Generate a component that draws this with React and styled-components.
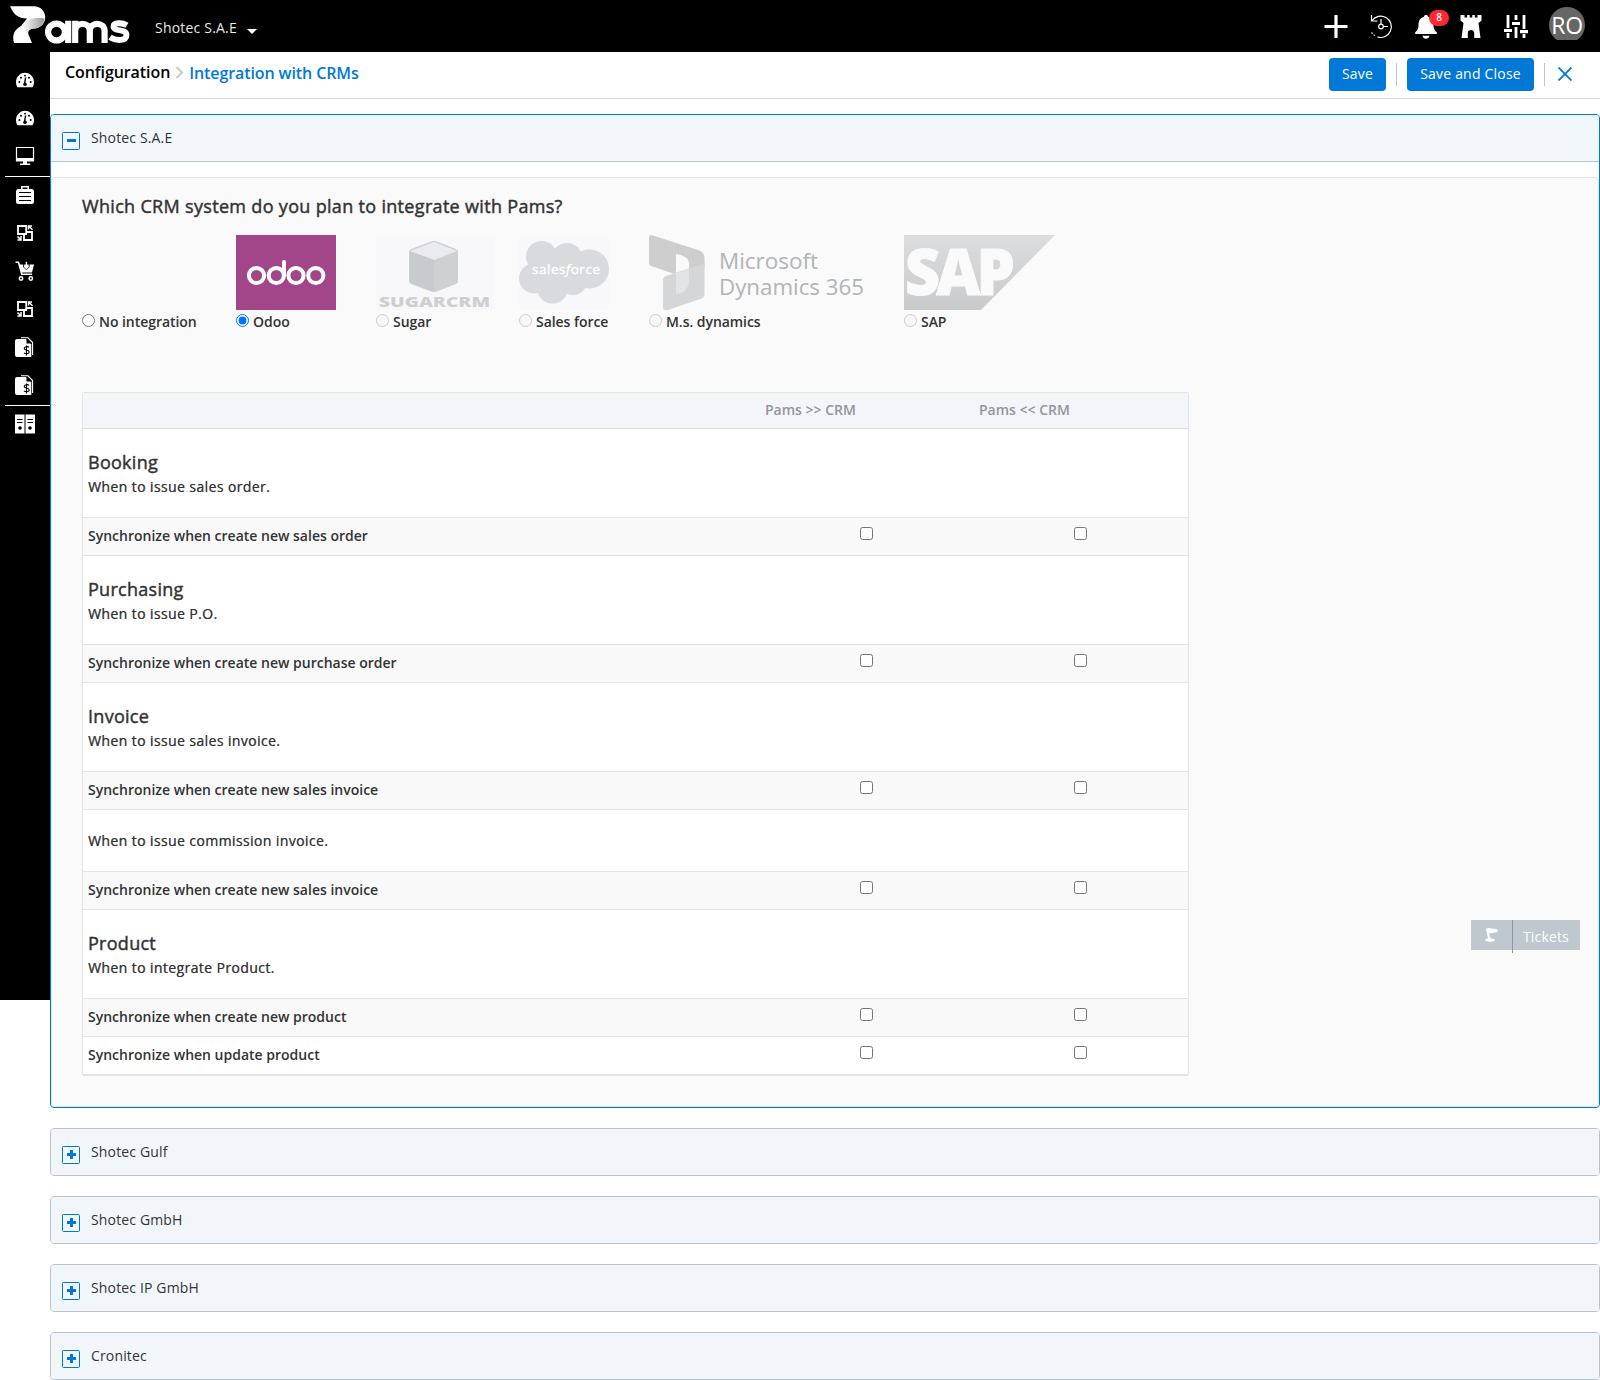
import React from 'react';
import styled, { createGlobalStyle } from 'styled-components';

const GlobalStyle = createGlobalStyle`
    * {
        box-sizing: border-box;
    }
    body {
        margin: 0;
        background: #fff;
        color: #333;
        font-family: 'Open Sans', 'Liberation Sans', sans-serif;
        font-size: 14px;
    }
`;

const TopBar = styled.header`
    height: 52px;
    background: #000;
    color: #fff;
    display: flex;
    align-items: flex-start;
    padding-left: 10px;
    padding-right: 15px;
`;

const Logo = styled.svg`
    width: 120px;
    height: 40px;
    margin-top: 5px;
`;

const CompanyPicker = styled.div`
    margin-left: 25px;
    display: flex;
    align-items: center;
    height: 55px;
    gap: 10px;
    letter-spacing: 0.2px;
    color: #e8e8e8;
`;

const Caret = styled.span`
    margin-top: 7px;
    border: 5px solid transparent;
    border-top-color: #fff;
    border-bottom: 0;
`;

const Actions = styled.div`
    margin-left: auto;
    display: flex;
    padding-top: 14px;
    gap: 21px;
    svg {
        width: 24px;
        height: 25px;
        display: block;
    }
`;

const Bell = styled.div`
    position: relative;
`;

const Badge = styled.span`
    position: absolute;
    left: 15px;
    top: -4px;
    width: 20px;
    height: 16px;
    border-radius: 8px;
    background: #ff2830;
    font-size: 10px;
    line-height: 15px;
    font-weight: 600;
    text-align: center;
`;

const AvatarFrame = styled.div`
    width: 36px;
    height: 33px;
    margin-top: -7px;
    overflow: hidden;
`;

const Avatar = styled.div`
    width: 36px;
    height: 36px;
    border-radius: 50%;
    background: #666;
    font-size: 23px;
    line-height: 36px;
    text-align: center;
    letter-spacing: -0.2px;
`;

const Layout = styled.div`
    display: flex;
    align-items: flex-start;
`;

const Sidebar = styled.nav`
    width: 50px;
    height: 948px;
    background: #000;
    padding-top: 9px;
`;

const SideItem = styled.div`
    height: 38px;
    display: flex;
    align-items: center;
    justify-content: center;
    svg {
        width: 20px;
        height: 20px;
    }
`;

const SideDivider = styled.div`
    height: 1px;
    margin: 1px 0 -1px 5px;
    background: #fff;
`;

const Main = styled.main`
    flex: 1;
    min-width: 0;
`;

const PageBar = styled.div`
    height: 47px;
    border-bottom: 1px solid #d9d9d9;
    display: flex;
    padding: 6px 28px 0 15px;
`;

const Crumbs = styled.div`
    display: flex;
    align-items: flex-start;
    font-size: 16px;
    font-weight: 600;
    line-height: 22px;
    letter-spacing: -0.08px;
    color: #000;
    padding-top: 3px;
    svg {
        width: 9px;
        height: 13px;
        margin: 5px 5px 0 5px;
    }
`;

const Current = styled.span`
    color: #0078d7;
    padding-top: 1px;
    letter-spacing: -0.1px;
`;

const Tools = styled.div`
    margin-left: auto;
    display: flex;
    align-items: flex-start;
`;

const Button = styled.button`
    width: ${props => props.$width}px;
    height: 33px;
    border: 0;
    padding: 0 0 2px;
    border-radius: 4px;
    background: #0078d7;
    color: #fff;
    font: inherit;
    letter-spacing: 0.2px;
`;

const Separator = styled.span`
    width: 1px;
    height: 23px;
    margin: 5px 10px 0;
    background: #bcc6cc;
`;

const CloseIcon = styled.svg`
    width: 14px;
    height: 14px;
    margin: 9px 0 0 3px;
`;

const Accordion = styled.div`
    margin-top: 15px;
    display: flex;
    flex-direction: column;
    gap: 20px;
`;

const Panel = styled.section`
    border: 1px solid ${props => (props.$open ? '#0078d7' : '#b9c3cb')};
    border-radius: 4px;
    height: ${props => (props.$open ? 994 : 48)}px;
    overflow: hidden;
    background: #fff;
`;

const PanelHeader = styled.div`
    height: ${props => (props.$open ? 47 : 46)}px;
    background: #f1f6fb;
    border-bottom: ${props => (props.$open ? '1px solid #b9c3cb' : '0')};
    display: flex;
    padding: 0 11px;
    gap: 11px;
    line-height: 46px;
    letter-spacing: 0.15px;
    svg {
        width: 18px;
        height: 18px;
        margin-top: 17px;
    }
`;

const PanelBody = styled.div`
    margin-top: 15px;
    height: 930px;
    border: 1px solid #e3e7ea;
    border-radius: 4px;
    background: #fafafa;
    padding: 15px 30px 0;
`;

const Question = styled.h2`
    margin: 0;
    font-size: 18px;
    line-height: 26px;
    font-weight: 400;
    letter-spacing: 0.32px;
    -webkit-text-stroke: 0.45px;
`;

const Systems = styled.div`
    display: flex;
    align-items: flex-end;
    margin-top: 16px;
    height: 98px;
`;

const System = styled.label`
    display: flex;
    flex-direction: column;
    width: ${props => props.$width}px;
    margin-right: ${props => props.$gap || 40}px;
    svg {
        display: block;
        height: 75px;
        width: ${props => props.$width}px;
    }
`;

const SystemName = styled.span`
    display: flex;
    align-items: center;
    gap: 4px;
    height: 23px;
    font-weight: 600;
    white-space: nowrap;
    letter-spacing: -0.05px;
`;

const Radio = styled.input`
    margin: 0 0 2px;
    width: 13px;
    height: 13px;
    flex: none;
`;

const Table = styled.div`
    width: 1107px;
    margin-top: 59px;
    border: 1px solid #e0e5e8;
    border-radius: 2px;
    background: #fff;
`;

const Row = styled.div`
    display: grid;
    grid-template-columns: 677px 214px 214px;
    border-bottom: 1px solid #e0e5e8;
`;

const HeadRow = styled(Row)`
    height: 36px;
    background: #f3f5fb;
    border-bottom-color: #d8dce1;
    color: #929699;
    font-weight: 600;
    line-height: 34px;
    span {
        padding-left: 5px;
    }
`;

const SectionRow = styled(Row)`
    height: ${props => (props.$short ? 62 : 89)}px;
    align-content: center;
    padding-top: ${props => (props.$short ? 0 : 2)}px;
    padding-left: 5px;
`;

const SectionTitle = styled.h3`
    grid-column: 1 / -1;
    margin: 0;
    font-size: 18px;
    line-height: 25px;
    font-weight: 400;
    letter-spacing: 0.28px;
    -webkit-text-stroke: 0.45px;
`;

const SectionNote = styled.p`
    grid-column: 1 / -1;
    margin: 0;
    line-height: 23px;
    letter-spacing: 0.4px;
    text-shadow: 0.4px 0 0 rgba(51, 51, 51, 0.7);
`;

const OptionRow = styled(Row)`
    height: 38px;
    background: ${props => (props.$plain ? '#fff' : '#f9f9fa')};
    font-weight: 600;
    line-height: 35px;
    padding-left: 5px;
    grid-template-columns: 671px 214px 214px;
`;

const Check = styled.input`
    margin: 9px 0 0;
    width: 13px;
    height: 13px;
    justify-self: center;
`;

const Tickets = styled.div`
    position: absolute;
    left: 1471px;
    top: 920px;
    width: 109px;
    height: 30px;
    background: #bec8ce;
    color: #fff;
    display: flex;
    line-height: 34px;
    letter-spacing: 0.15px;
    svg {
        width: 41px;
        height: 30px;
    }
    span {
        height: 33px;
        border-left: 1px solid #8f979e;
        padding-left: 10px;
    }
`;

const Gauge = () => (
    <svg viewBox="0 0 20 20">
        <path d="M2.4 17.300A9 9.500 0 1 1 17.600 17.300Z" fill="#fff" />
        <path d="M10.600 7.500 9.700 13" stroke="#000" strokeWidth="1.500" />
        <circle cx="10" cy="14.200" r="1.800" />
        <circle cx="4.400" cy="12" r="1" />
        <circle cx="6" cy="7.800" r="1" />
        <circle cx="10" cy="5.700" r=".9" />
        <circle cx="14" cy="7.800" r="1" />
        <circle cx="15.700" cy="12" r="1" />
    </svg>
);

const Monitor = () => (
    <svg viewBox="0 0 20 20">
        <path d="M1.500 1.500h17v13h-17z" fill="none" stroke="#fff" strokeWidth="1.200" />
        <path d="M1 12h18v3.500H1zM8 15h4v2.500h3.200V19H5v-1.500h3z" fill="#fff" />
    </svg>
);

const Briefcase = () => (
    <svg viewBox="0 0 20 20">
        <path d="M6.800 5V1.700h6.400V5" fill="none" stroke="#fff" strokeWidth="1.500" />
        <rect x="1" y="4" width="18" height="15" rx="2.500" fill="#fff" />
        <path d="M4 7.500h12M4 11.500h12M4 15.500h12" stroke="#000" strokeWidth="1" />
    </svg>
);

const Swap = () => (
    <svg viewBox="0 0 20 20" fill="none" stroke="#fff">
        <path d="M3 3h8.200v8H3zM12 9h5v8H9v-5" strokeWidth="1.800" />
        <path d="M17.500 6.800 13.500 3M13.500 6.500V3H17M2.500 13.500l3 3M6 13v4H2.500" strokeWidth="1.500" />
    </svg>
);

const Cart = () => (
    <svg viewBox="0 0 20 20">
        <path d="M.5 1.200h3L6.800 13.300h10.400" fill="none" stroke="#fff" strokeWidth="1.600" />
        <path d="M4.500 3.500H19l-2 8H6.600z" fill="#fff" />
        <path d="M8.700 3v3l2.700 2.800L14.100 6V3" fill="none" stroke="#000" strokeWidth="1" />
        <path d="M11.400.8v6.500M9.300 5.300l2.100 2.200 2.100-2.200" fill="none" stroke="#fff" strokeWidth="1.300" />
        <circle cx="6" cy="17.500" r="1.700" fill="none" stroke="#fff" strokeWidth="1.500" />
        <circle cx="15.800" cy="17.500" r="1.700" fill="none" stroke="#fff" strokeWidth="1.500" />
    </svg>
);

const Invoice = () => (
    <svg viewBox="0 0 20 20">
        <path d="M6 .8h7l4.600 4.700V18" fill="none" stroke="#fff" strokeWidth="1.100" />
        <path d="M2 2h9l5.300 5v13H2a2 2 0 0 1-2-2V4a2 2 0 0 1 2-2z" fill="#fff" />
        <path d="M11.500 1.800v4.700h5" fill="#000" />
        <path d="M14 10.300c-1-1.100-4.800-.9-4.800 1.200 0 2.300 5 1 5 3.400 0 2.200-3.900 2.200-5.300 1M11.500 8.500v10" fill="none" stroke="#000" strokeWidth="1.100" />
    </svg>
);

const Binders = () => (
    <svg viewBox="0 0 20 20">
        <path d="M0 .5h9.500v19H0zM10.500.5H20v19h-9.500z" fill="#fff" />
        <path d="M2 5.500h5.500M2 8.500h5.500M12.500 5.500H18M12.500 8.500H18" stroke="#000" strokeWidth="1.100" />
        <circle cx="5" cy="14" r="1.800" />
        <circle cx="15" cy="14" r="1.800" />
    </svg>
);

const Toggle = ({ open }) => (
    <svg viewBox="0 0 18 18">
        <rect x=".5" y=".5" width="17" height="17" rx="1" fill="none" stroke="#0078d7" />
        <path d={open ? 'M5 8.500h9' : 'M5 8.500h9M9.500 4v9'} stroke="#0078d7" strokeWidth="3" />
    </svg>
);

const PamsLogo = () => (
    <Logo viewBox="0 0 120 40">
        <defs>
            <linearGradient id="fold" x1="0" x2="1">
                <stop offset="0" stopColor="#fff" />
                <stop offset="1" stopColor="#999" />
            </linearGradient>
        </defs>
        <path d="M0 1.200h24c7 0 11.500 5 11.200 12-.8 7-6 10-12.200 10.500-4 .5-6 3-4 7L22 38H4c-2-8 0-13 7-17l6-7.500C8 13 4 10 0 1.200z" fill="#fff" />
        <path d="M12 20.500c4-6 12-8.500 22.500-7C34 21 28 23.500 22.500 23.700c-4 .3-6 3-4.500 7-3-5-5-7-6-10.200z" fill="url(#fold)" />
        <g fill="none" stroke="#fff" strokeWidth="6.200">
            <circle cx="46.500" cy="27" r="8.400" />
            <path d="M58.200 15.700V38M65.200 38V15.700M65.200 26c0-9.500 14.600-9.500 14.600 0v12M79.800 26c0-9.500 14.800-9.500 14.800 0v12" />
            <path d="M117 20.200c-4.500-2.600-13.500-3-13.500 1.200 0 5.400 13 2.200 13 8.600 0 6.500-11 6-16.500 2.200" strokeWidth="5.800" />
        </g>
    </Logo>
);

const OdooLogo = () => (
    <svg viewBox="0 0 100 75">
        <path d="M0 0h100v75H0z" fill="#a24689" />
        <g fill="none" stroke="#fff" strokeWidth="4">
            <circle cx="20.500" cy="40.500" r="7.600" />
            <circle cx="40.300" cy="40.500" r="7.600" />
            <circle cx="60" cy="40.500" r="7.600" />
            <circle cx="79.800" cy="40.500" r="7.600" />
            <path d="M48 40.500V27" strokeLinecap="round" />
        </g>
    </svg>
);

const SugarLogo = () => (
    <svg viewBox="0 0 119 75">
        <path d="M0 0h119v75H0z" fill="#f8f8fb" />
        <path d="M33 17q0-2 2-3L55 6.500q3-1.200 6 0L80 14q2 1 2 3v29q0 2-2 3L61 56.500q-3 1-6 0L35 49q-2-1-2-3z" fill="#ced0d1" />
        <path d="M34 16 58 7l23 9-23 9z" fill="#e8ecee" />
        <path d="M34 16.500 58 25v31.500L35 48q-1-.5-1-2z" fill="#c8cbcd" />
        <text x="3" y="71.500" textLength="111" lengthAdjust="spacingAndGlyphs" fontSize="14.500" fontWeight="800" fill="#cfcfd0">SUGARCRM</text>
    </svg>
);

const SalesforceLogo = () => (
    <svg viewBox="0 0 90 75">
        <path d="M0 0h90v75H0z" fill="#f8f8fb" />
        <g fill="#d9dadd">
            <circle cx="22.500" cy="21.500" r="15.500" />
            <circle cx="48" cy="24" r="16" />
            <circle cx="70.500" cy="34" r="19.500" />
            <circle cx="15" cy="43.500" r="15" />
            <circle cx="33.500" cy="53" r="15.500" />
            <circle cx="54" cy="46" r="14" />
            <path d="M15 25h50v25H15z" />
        </g>
        <text x="13" y="39" textLength="68" fontSize="13.500" fill="#fff" stroke="#fff" strokeWidth=".3">
            sales<tspan fontStyle="italic">f</tspan>orce
        </text>
    </svg>
);

const DynamicsLogo = () => (
    <svg viewBox="0 0 215 75">
        <path d="M0 3Q0-1 4 .5L49 15q6.500 2 6.500 8v10L40 36.500V29q0-8-13-10v16.500q0 4-3 3L2 31q-2-.5-2-3z" fill="#cecece" />
        <path d="M14 45q0-3 3-4l35-11.500q3.500-1 3.500-3.500v33q0 3-3 4.500L19 75q-5 1-5-3z" fill="#d4d6d7" />
        <path d="M27 38v21.500q13-2 13-15V34z" fill="#e2e4e6" />
        <g fontFamily="Open Sans" fontSize="22.500" fill="#b0b4b8">
            <text x="70" y="34" textLength="99" lengthAdjust="spacingAndGlyphs">Microsoft</text>
            <text x="70" y="60" textLength="145" lengthAdjust="spacingAndGlyphs">Dynamics 365</text>
        </g>
    </svg>
);

const SapLogo = () => (
    <svg viewBox="0 0 151 75">
        <defs>
            <linearGradient id="sap" x1="0" x2="0" y1="0" y2="1">
                <stop offset="0" stopColor="#dcddde" />
                <stop offset="1" stopColor="#c9cacb" />
            </linearGradient>
        </defs>
        <path d="M0 0h151L77 75H0z" fill="url(#sap)" />
        <text x="1" y="60" textLength="106" lengthAdjust="spacingAndGlyphs" fontFamily="Open Sans" fontWeight="800" fontSize="63" letterSpacing="-4" fill="#fafafa" stroke="#fafafa" strokeWidth="1">SAP</text>
    </svg>
);

const systems = [
    { name: 'No integration', width: 114 },
    { name: 'Odoo', width: 100, Picture: OdooLogo },
    { name: 'Sugar', width: 119, gap: 24, Picture: SugarLogo, disabled: true },
    { name: 'Sales force', width: 90, Picture: SalesforceLogo, disabled: true },
    { name: 'M.s. dynamics', width: 215, Picture: DynamicsLogo, disabled: true },
    { name: 'SAP', width: 151, Picture: SapLogo, disabled: true },
];

const sections = [
    { title: 'Booking', note: 'When to issue sales order.', options: ['Synchronize when create new sales order'] },
    { title: 'Purchasing', note: 'When to issue P.O.', options: ['Synchronize when create new purchase order'] },
    { title: 'Invoice', note: 'When to issue sales invoice.', options: ['Synchronize when create new sales invoice'] },
    { note: 'When to issue commission invoice.', options: ['Synchronize when create new sales invoice'] },
    {
        title: 'Product',
        note: 'When to integrate Product.',
        options: ['Synchronize when create new product', 'Synchronize when update product'],
    },
];

const companies = ['Shotec Gulf', 'Shotec GmbH', 'Shotec IP GmbH', 'Cronitec'];

const menu = [
    [Gauge, Gauge, Monitor],
    [Briefcase, Swap, Cart, Swap, Invoice, Invoice],
    [Binders],
];

const Header = () => (
    <TopBar>
        <PamsLogo />
        <CompanyPicker>Shotec S.A.E <Caret /></CompanyPicker>
        <Actions>
            <svg viewBox="0 0 24 25"><path d="M12 1v23M.5 12.500h23" stroke="#fff" strokeWidth="3.200" /></svg>
            <svg viewBox="0 0 24 25" fill="none" stroke="#fff" strokeWidth="1.200">
                <path d="M3 6.500A10.700 10.700 0 1 1 8.500 23M2.500 1v6h6" />
                <path d="M2.500 18.500 6 22" strokeDasharray="1.500 1.500" />
                <circle cx="12" cy="12.500" r="2.300" />
                <path d="M12 5v5M14.500 12.500H19" />
            </svg>
            <Bell>
                <svg viewBox="0 0 24 25">
                    <path d="M12 1c1.200 0 2 .7 2 1.700 4 1 5.500 4.300 5.500 8.300 0 4 1.300 5.500 3 7 .9.900.5 2-1 2h-19c-1.500 0-1.900-1.100-1-2 1.700-1.500 3-3 3-7 0-4 1.500-7.300 5.500-8.300C10 1.700 10.800 1 12 1zM8.500 21.800h7c-.5 4-6.500 4-7 0z" fill="#fff" />
                </svg>
                <Badge>8</Badge>
            </Bell>
            <svg viewBox="0 0 24 25">
                <path d="M1.500 1h4v2.500h2.700V1h2.500v2.500h2.600V1h2.500v2.500h2.700V1h4v5.500L19.500 9l2 15h-6.300v-5c0-4-6.400-4-6.400 0v5H2.500l2-15-3-2.500z" fill="#fff" />
            </svg>
            <svg viewBox="0 0 24 25" stroke="#fff" strokeWidth="2.800">
                <path d="M4 1v13M4 19v5M12 1v5M12 13v11M20 1v14M20 20v4" />
                <path d="M0 16.500h8M8 9.500h8M16 17.700h8" strokeWidth="3.200" />
            </svg>
            <AvatarFrame><Avatar>RO</Avatar></AvatarFrame>
        </Actions>
    </TopBar>
);

const CrmTable = () => (
    <Table>
        <HeadRow><span /><span>Pams &gt;&gt; CRM</span><span>Pams &lt;&lt; CRM</span></HeadRow>
        {sections.map(({ title, note, options }) => (
            <React.Fragment key={note}>
                <SectionRow $short={!title}>
                    {title && <SectionTitle>{title}</SectionTitle>}
                    <SectionNote>{note}</SectionNote>
                </SectionRow>
                {options.map((option, i) => (
                    <OptionRow key={option} $plain={i > 0}>
                        {option}
                        <Check type="checkbox" />
                        <Check type="checkbox" />
                    </OptionRow>
                ))}
            </React.Fragment>
        ))}
    </Table>
);

const App = () => (
    <>
        <GlobalStyle />
        <Header />
        <Layout>
            <Sidebar>
                {menu.map((group, g) => (
                    <React.Fragment key={g}>
                        {g > 0 && <SideDivider />}
                        {group.map((Icon, i) => <SideItem key={i}><Icon /></SideItem>)}
                    </React.Fragment>
                ))}
            </Sidebar>
            <Main>
                <PageBar>
                    <Crumbs>
                        Configuration
                        <svg viewBox="0 0 9 13"><path d="m1.500 1 5.500 5.500L1.500 12" fill="none" stroke="#ccc" strokeWidth="2.200" /></svg>
                        <Current>Integration with CRMs</Current>
                    </Crumbs>
                    <Tools>
                        <Button $width={57}>Save</Button>
                        <Separator />
                        <Button $width={127}>Save and Close</Button>
                        <Separator />
                        <CloseIcon viewBox="0 0 14 14"><path d="m.5.5 13 13M13.500.5l-13 13" stroke="#0078d7" strokeWidth="1.800" /></CloseIcon>
                    </Tools>
                </PageBar>
                <Accordion>
                    <Panel $open>
                        <PanelHeader $open><Toggle open />Shotec S.A.E</PanelHeader>
                        <PanelBody>
                            <Question>Which CRM system do you plan to integrate with Pams?</Question>
                            <Systems>
                                {systems.map(({ name, width, gap, Picture, disabled }) => (
                                    <System key={name} $width={width} $gap={gap}>
                                        {Picture && <Picture />}
                                        <SystemName>
                                            <Radio type="radio" name="crm" disabled={disabled} defaultChecked={name === 'Odoo'} />
                                            {name}
                                        </SystemName>
                                    </System>
                                ))}
                            </Systems>
                            <CrmTable />
                        </PanelBody>
                    </Panel>
                    {companies.map(company => (
                        <Panel key={company}>
                            <PanelHeader><Toggle />{company}</PanelHeader>
                        </Panel>
                    ))}
                </Accordion>
            </Main>
        </Layout>
        <Tickets>
            <svg viewBox="0 0 41 30"><path d="M15 8.500 18 8l8.500 1.500V12l-6.500 1.200-2-.4 1.500 5.700c6 0 6 3.200 0 3.200-6.500 0-7-2.700-2.500-3.200l-1.500-7z" fill="#fff" /></svg>
            <span>Tickets</span>
        </Tickets>
    </>
);

export default App;
